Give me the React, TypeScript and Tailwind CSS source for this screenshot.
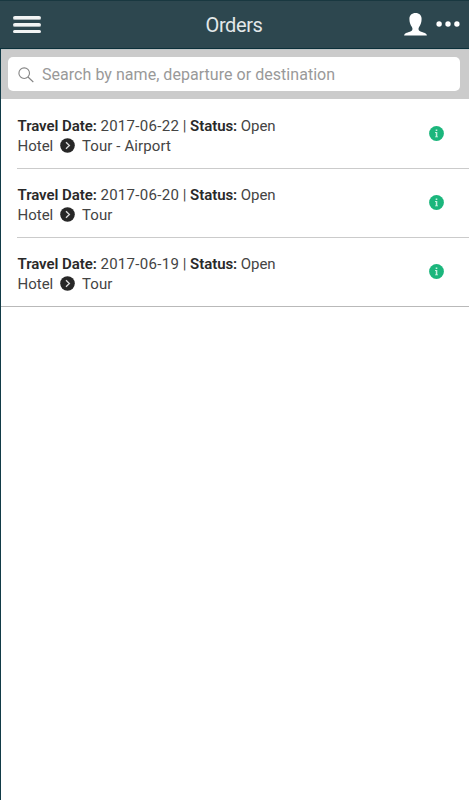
type Order = { date: string; destination: string };

const orders: Order[] = [
  { date: '2017-06-22', destination: 'Tour - Airport' },
  { date: '2017-06-20', destination: 'Tour' },
  { date: '2017-06-19', destination: 'Tour' },
];

function Header() {
  return (
    <header className="grid h-[49px] shrink-0 grid-cols-[1fr_auto_1fr] items-center border-t border-b border-t-[#193840] border-b-[#0b303a] bg-[#2d474f] pr-[9px] pl-[13px]">
      <button aria-label="Menu" className="flex w-[28px] flex-col gap-[3px]">
        <span className="h-1 rounded-sm border-b border-[#aab5b8] bg-[#f2f4f4]" />
        <span className="h-1 rounded-sm border-b border-[#aab5b8] bg-[#f2f4f4]" />
        <span className="h-[3px] rounded-sm bg-[#f2f4f4]" />
      </button>
      <h1 className="-ml-[5px] text-[20px] leading-6 tracking-[-0.4px] text-[#e3e8e9]">Orders</h1>
      <div className="flex items-center justify-end gap-[9px]">
        <svg width="23" height="23" viewBox="0 0 23 23" fill="white" aria-hidden="true">
          <path d="M11.6 0C7.8 0 5.4 2.3 5.4 5.8c0 3.5.9 6.1 2.5 8.1.8 1.1.8 3.1-.2 3.9-1.8 1.4-6.1 1.8-7.3 3.6L.1 22.6h22.8l-.3-1.2c-1.2-1.8-5.5-2.2-7.3-3.6-1-.8-1-2.8-.2-3.9 1.6-2 2.5-4.6 2.5-8.1C17.6 2.3 15.3 0 11.6 0Z" />
        </svg>
        <svg className="-mt-0.5" width="24" height="6" viewBox="0 0 24 6" fill="white" aria-hidden="true">
          <circle cx="3.1" cy="3" r="2.7" />
          <circle cx="12" cy="3" r="2.7" />
          <circle cx="20.9" cy="3" r="2.7" />
        </svg>
      </div>
    </header>
  );
}

function SearchBar() {
  return (
    <div className="h-[50px] shrink-0 border-t border-t-[#bfc4c5] bg-[#cbcbcb] pt-[7px] pr-[9px] pl-[7px]">
      <label className="flex h-[34px] items-center rounded-[5px] bg-white pl-[10px]">
        <svg className="mt-px" width="16" height="16" viewBox="0 0 16 16" fill="none" stroke="#858585" strokeWidth="1.1" aria-hidden="true">
          <circle cx="6.2" cy="6.2" r="5.3" />
          <path d="m10 10 5.3 5" />
        </svg>
        <span className="mt-0.5 ml-2 text-[16px] leading-5 tracking-[0.04px] whitespace-nowrap text-[#999]">
          Search by name, departure or destination
        </span>
      </label>
    </div>
  );
}

function OrderRow({ date, destination }: Order) {
  return (
    <li className="group pl-4 last:pl-0">
      <div className="flex h-[69px] items-start border-b border-[#cbcbcb] group-last:border-[#b9b9b9] group-last:pl-4">
        <div className="grow pt-[16px] pl-[0.5px] text-[15px] leading-5 text-[#444]">
          <p className="tracking-[-0.06px] whitespace-nowrap">
            <b className="font-semibold text-[#292929]">Travel Date:</b>{' '}
            <span className="tracking-[0.3px]">{date}</span> |{' '}
            <b className="font-semibold text-[#292929]">Status:</b> Open
          </p>
          <p className="flex items-center">
            <span className="w-[42px]">Hotel</span>
            <svg className="mr-[7.5px] mb-[2px]" width="15" height="15" viewBox="0 0 15 15" fill="none" aria-hidden="true">
              <circle cx="7.5" cy="7.5" r="7.3" fill="#272727" />
              <path d="m6 4.2 3.4 3.3L6 10.8" stroke="#ddd" strokeWidth="1.3" />
            </svg>
            <span className="tracking-[0.1px]">{destination}</span>
          </p>
        </div>
        <svg className="mt-[26px] mr-[25px]" width="15" height="15" viewBox="0 0 15 15" aria-hidden="true">
          <circle cx="7.5" cy="7.5" r="7.4" fill="#1bb67c" />
          <path d="M6.7 3.6h1.6v1.5H6.7ZM6 6.1h2.3v4.3H9v.9H6v-.9h.8V7H6Z" fill="#c9f0e0" />
        </svg>
      </div>
    </li>
  );
}

export default function App() {
  return (
    <div className="flex h-[800px] w-full flex-col overflow-hidden bg-white font-[Roboto,sans-serif]">
      <Header />
      <main className="flex grow flex-col border-l border-l-[#123b47]">
        <SearchBar />
        <ul className="pt-px">
          {orders.map((order) => (
            <OrderRow key={order.date} {...order} />
          ))}
        </ul>
      </main>
    </div>
  );
}
